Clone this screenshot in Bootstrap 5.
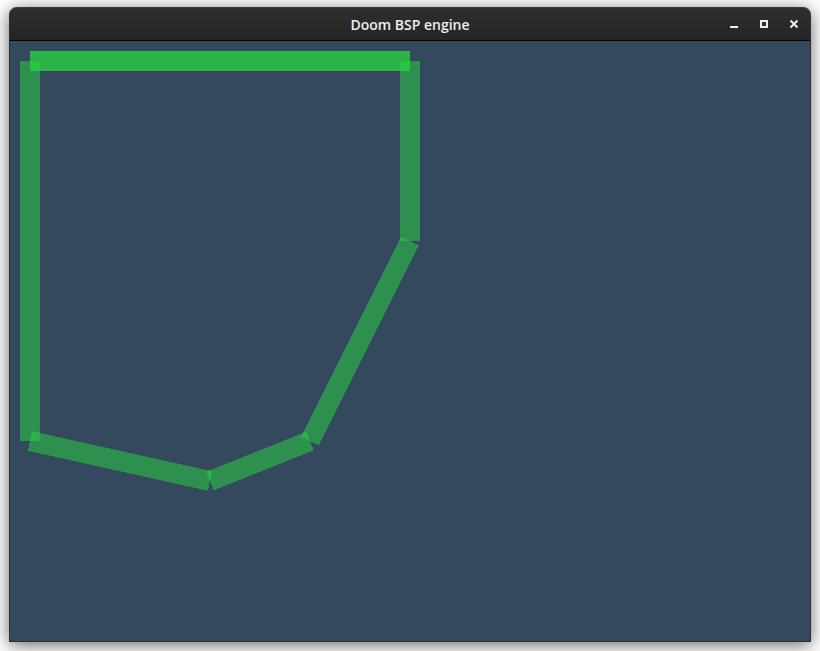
<!DOCTYPE html>
<html lang="en">
<head>
<meta charset="utf-8">
<meta name="viewport" content="width=device-width, initial-scale=1">
<title>Doom BSP engine</title>
<link href="https://cdn.jsdelivr.net/npm/bootstrap@5.3.0/dist/css/bootstrap.min.css" rel="stylesheet">
<script src="https://cdn.jsdelivr.net/npm/bootstrap@5.3.0/dist/js/bootstrap.bundle.min.js" defer></script>
<style>
  body { background: #fff; padding: 7px 9px 9px; }
  .app-window {
    border: 1px solid #2b3133;
    border-top-color: #393939;
    border-radius: 8px 8px 0 0;
    background: #34495e;
    box-shadow: 0 3px 18px rgba(0, 0, 0, .6);
  }
  .title-bar {
    display: grid;
    grid-template-columns: 1fr auto 1fr;
    height: 33px;
    padding: 0 1px;
    background: linear-gradient(#2e2e2e, #252525);
    border-bottom: 1px solid #000;
    border-radius: 7px 7px 0 0;
    color: #eeeeec;
  }
  .window-title { grid-column: 2; padding-top: 2px; font: 600 14px/20px "Open Sans", "Noto Sans", sans-serif; }
  .window-btn { width: 30px; height: 30px; color: #eeeeec; border: 0; border-radius: 4px; }
  .map-view svg { max-width: 100%; height: auto; }
  .walls { stroke: #27d640; stroke-opacity: .51; stroke-width: 20; }
</style>
</head>
<body class="d-flex flex-column min-vh-100">
<main class="app-window flex-grow-1 d-flex flex-column">
  <header class="title-bar align-items-center">
    <h1 class="window-title m-0">Doom BSP engine</h1>
    <div class="d-flex justify-content-end">
      <button type="button" class="window-btn btn p-0 d-flex align-items-center justify-content-center" aria-label="Minimize">
        <svg width="16" height="16" fill="currentColor" shape-rendering="crispEdges"><path d="M4 10h8v2H4z"/></svg>
      </button>
      <button type="button" class="window-btn btn p-0 d-flex align-items-center justify-content-center" aria-label="Maximize">
        <svg width="16" height="16" fill="none" stroke="currentColor" stroke-width="2" shape-rendering="crispEdges"><path d="M5 5h6v6H5z"/></svg>
      </button>
      <button type="button" class="window-btn btn p-0 d-flex align-items-center justify-content-center" aria-label="Close">
        <svg width="16" height="16" fill="none" stroke="currentColor" stroke-width="2"><path d="M4.5 4.5l7 7m0-7l-7 7"/></svg>
      </button>
    </div>
  </header>
  <section class="flex-grow-1 map-view">
    <svg class="d-block" width="800" height="600" viewBox="0 0 800 600" role="img" aria-label="Level map walls">
      <g class="walls" shape-rendering="crispEdges">
        <path d="M20 20H400"/>
        <path d="M20 20H400"/>
        <path d="M400 20V200"/>
        <path d="M400 200L300 400"/>
        <path d="M300 400L200 440"/>
        <path d="M200 440L20 400"/>
        <path d="M20 400V20"/>
      </g>
    </svg>
  </section>
</main>
</body>
</html>
